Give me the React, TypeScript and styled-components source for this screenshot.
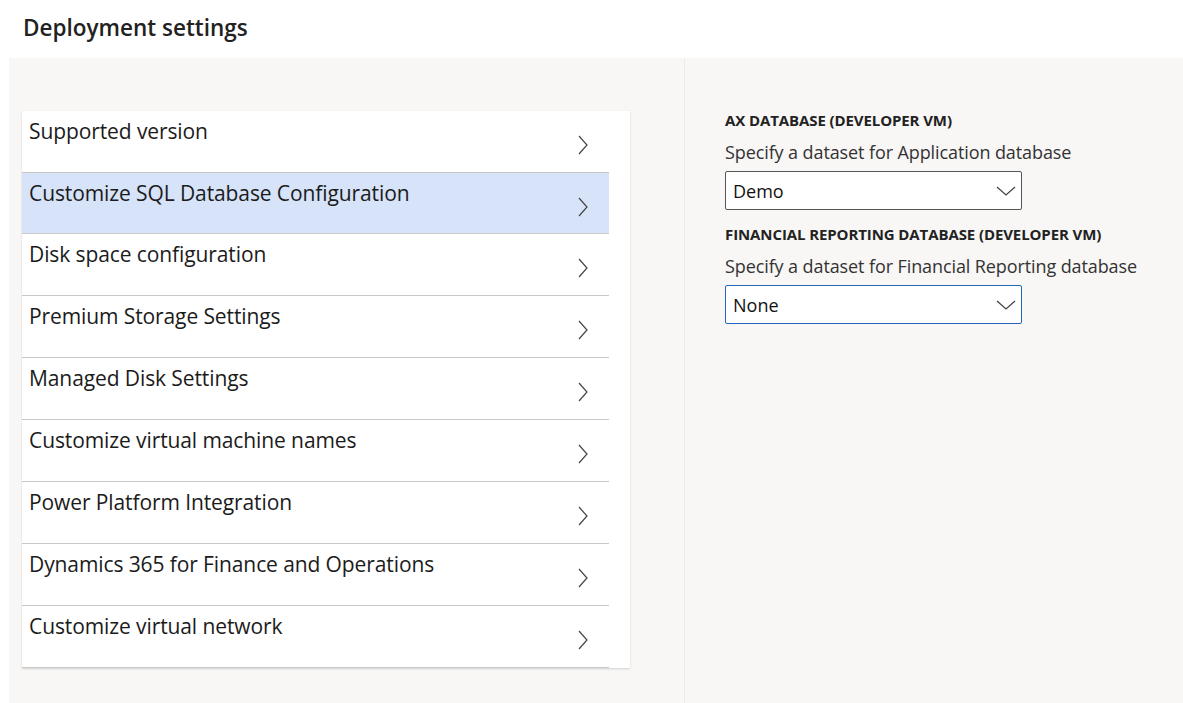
import React from "react";
import styled, { createGlobalStyle } from "styled-components";

const Global = createGlobalStyle`
  body { margin: 0; background: #fff; font-family: "Segoe UI", "Open Sans", sans-serif; color: #1b1b1b; }
`;
const Page = styled.div`display:flex;flex-direction:column;height:703px;`;
const Title = styled.h1`margin:0;padding:12px 0 0 23px;height:58px;box-sizing:border-box;font-size:22.5px;font-weight:600;color:#222;`;
const Panel = styled.div`flex:1;margin-left:9px;background:#f8f7f6;display:grid;grid-template-columns:676px 1fr;`;
const LeftCol = styled.div`padding:53px 0 0 13px;border-right:1px solid #ecebea;`;
const Card = styled.div`width:608px;background:#fff;box-shadow:0 1px 2px rgba(0,0,0,0.15);`;
const Row = styled.div<{ $sel?: boolean }>`
  width:587px;height:62px;box-sizing:border-box;display:flex;justify-content:space-between;
  background:${p => (p.$sel ? "#d6e3f8" : "#fff")};
  border-bottom:1px solid #c8c8c8;
  margin-top:${p => (p.$sel ? "-1px" : "0")};
  border-top:${p => (p.$sel ? "1px solid #c8c8c8" : "none")};
`;
const RowText = styled.span`font-size:21px;padding:6px 0 0 7px;letter-spacing:-0.1px;`;
const Chev = styled.svg`margin:24px 20px 0 0;`;
const RightCol = styled.div`padding:52px 0 0 40px;display:flex;flex-direction:column;`;
const Label = styled.div`font-size:15px;font-weight:700;color:#222;margin-bottom:10px;letter-spacing:-0.1px;`;
const Desc = styled.div`font-size:18px;color:#333;margin-bottom:7px;letter-spacing:-0.1px;`;
const Select = styled.div<{ $focus?: boolean }>`
  width:297px;height:39px;box-sizing:border-box;border:1px solid ${p => (p.$focus ? "#2266bb" : "#555")};
  border-radius:2px;background:#fff;display:flex;align-items:center;justify-content:space-between;
  padding:0 5px 0 7px;font-size:18px;color:#111;margin-bottom:14px;
`;

const items = [
  "Supported version",
  "Customize SQL Database Configuration",
  "Disk space configuration",
  "Premium Storage Settings",
  "Managed Disk Settings",
  "Customize virtual machine names",
  "Power Platform Integration",
  "Dynamics 365 for Finance and Operations",
  "Customize virtual network",
];

const Chevron = () => (
  <Chev width="12" height="20" viewBox="0 0 12 20"><path d="M2 1 L10 10 L2 19" fill="none" stroke="#444" strokeWidth="1.2" /></Chev>
);
const Down = () => (
  <svg width="20" height="12" viewBox="0 0 20 12"><path d="M1 2 L10 10 L19 2" fill="none" stroke="#444" strokeWidth="1.3" /></svg>
);

export default function App() {
  return (
    <Page>
      <Global />
      <Title>Deployment settings</Title>
      <Panel>
        <LeftCol>
          <Card>
            {items.map((t, i) => (
              <Row key={t} $sel={i === 1}>
                <RowText>{t}</RowText>
                <Chevron />
              </Row>
            ))}
          </Card>
        </LeftCol>
        <RightCol>
          <Label>AX DATABASE (DEVELOPER VM)</Label>
          <Desc>Specify a dataset for Application database</Desc>
          <Select>Demo<Down /></Select>
          <Label>FINANCIAL REPORTING DATABASE (DEVELOPER VM)</Label>
          <Desc>Specify a dataset for Financial Reporting database</Desc>
          <Select $focus>None<Down /></Select>
        </RightCol>
      </Panel>
    </Page>
  );
}
